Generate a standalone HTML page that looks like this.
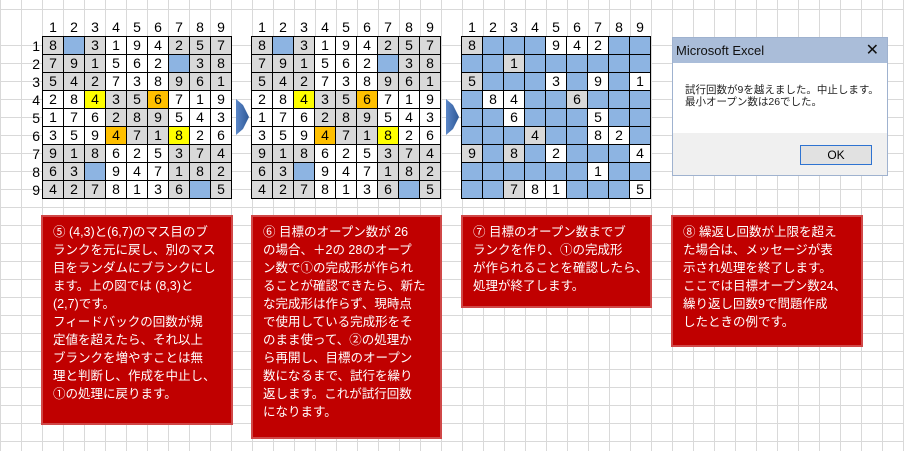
<!DOCTYPE html>
<html><head><meta charset="utf-8"><style>
body{margin:0;width:904px;height:451px;overflow:hidden;position:relative;background:#fff;
background-image:linear-gradient(to right,#d9d9d9 1px,transparent 1px),linear-gradient(to bottom,#d9d9d9 1px,transparent 1px);
background-size:21px 18px;background-position:0 9px;font-family:"Liberation Sans","Noto Sans CJK JP",sans-serif;}
.hdr{position:absolute;top:0;left:0;width:904px;height:36px;background:#fff;
background-image:linear-gradient(to right,#d9d9d9 1px,transparent 1px),linear-gradient(to bottom,#d9d9d9 1px,transparent 1px);background-size:21px 27px;background-position:0 9px;}
.sg{position:absolute;top:19px;}
.sg table{border-collapse:collapse;font-size:14px;}
.sg td{width:20px;height:17px;padding:0;text-align:center;line-height:17px;}
.sg tr.h td{border:none;height:17px;}
.sg td.b{border:1px solid #000;background:#fff}
.g{background:#d9d9d9!important}.u{background:#8db4e2!important}.y{background:#ffff00!important}.o{background:#ffc000!important}
.rl{position:absolute;font-size:14px;left:28px;}
.box{position:absolute;top:215px;background:#c00000;border:2px solid #d04848;color:#fff;font-size:12.5px;line-height:18px;padding:6px 0 0 10px;box-sizing:border-box;white-space:nowrap;}
.arr{position:absolute;top:95px;}
.dlg{position:absolute;left:672px;top:37px;width:216px;height:139px;background:#fff;border:1px solid #9fb2cf;box-sizing:border-box;}
</style></head><body>
<div class="hdr"></div>
<div class="rl" style="top:37px;line-height:18px;width:12px;text-align:right">1<br>2<br>3<br>4<br>5<br>6<br>7<br>8<br>9</div>

<div class="sg" style="left:42px"><table>
<tr class="h"><td>1</td><td>2</td><td>3</td><td>4</td><td>5</td><td>6</td><td>7</td><td>8</td><td>9</td></tr>
<tr><td class="b g">8</td><td class="b u"></td><td class="b g">3</td><td class="b">1</td><td class="b">9</td><td class="b">4</td><td class="b g">2</td><td class="b g">5</td><td class="b g">7</td></tr>
<tr><td class="b g">7</td><td class="b g">9</td><td class="b g">1</td><td class="b">5</td><td class="b">6</td><td class="b">2</td><td class="b u"></td><td class="b g">3</td><td class="b g">8</td></tr>
<tr><td class="b g">5</td><td class="b g">4</td><td class="b g">2</td><td class="b">7</td><td class="b">3</td><td class="b">8</td><td class="b g">9</td><td class="b g">6</td><td class="b g">1</td></tr>
<tr><td class="b">2</td><td class="b">8</td><td class="b y">4</td><td class="b g">3</td><td class="b g">5</td><td class="b o">6</td><td class="b">7</td><td class="b">1</td><td class="b">9</td></tr>
<tr><td class="b">1</td><td class="b">7</td><td class="b">6</td><td class="b g">2</td><td class="b g">8</td><td class="b g">9</td><td class="b">5</td><td class="b">4</td><td class="b">3</td></tr>
<tr><td class="b">3</td><td class="b">5</td><td class="b">9</td><td class="b o">4</td><td class="b g">7</td><td class="b g">1</td><td class="b y">8</td><td class="b">2</td><td class="b">6</td></tr>
<tr><td class="b g">9</td><td class="b g">1</td><td class="b g">8</td><td class="b">6</td><td class="b">2</td><td class="b">5</td><td class="b g">3</td><td class="b g">7</td><td class="b g">4</td></tr>
<tr><td class="b g">6</td><td class="b g">3</td><td class="b u"></td><td class="b">9</td><td class="b">4</td><td class="b">7</td><td class="b g">1</td><td class="b g">8</td><td class="b g">2</td></tr>
<tr><td class="b g">4</td><td class="b g">2</td><td class="b g">7</td><td class="b">8</td><td class="b">1</td><td class="b">3</td><td class="b g">6</td><td class="b u"></td><td class="b g">5</td></tr>
</table></div>

<div class="sg" style="left:251px"><table>
<tr class="h"><td>1</td><td>2</td><td>3</td><td>4</td><td>5</td><td>6</td><td>7</td><td>8</td><td>9</td></tr>
<tr><td class="b g">8</td><td class="b u"></td><td class="b g">3</td><td class="b">1</td><td class="b">9</td><td class="b">4</td><td class="b g">2</td><td class="b g">5</td><td class="b g">7</td></tr>
<tr><td class="b g">7</td><td class="b g">9</td><td class="b g">1</td><td class="b">5</td><td class="b">6</td><td class="b">2</td><td class="b u"></td><td class="b g">3</td><td class="b g">8</td></tr>
<tr><td class="b g">5</td><td class="b g">4</td><td class="b g">2</td><td class="b">7</td><td class="b">3</td><td class="b">8</td><td class="b g">9</td><td class="b g">6</td><td class="b g">1</td></tr>
<tr><td class="b">2</td><td class="b">8</td><td class="b y">4</td><td class="b g">3</td><td class="b g">5</td><td class="b o">6</td><td class="b">7</td><td class="b">1</td><td class="b">9</td></tr>
<tr><td class="b">1</td><td class="b">7</td><td class="b">6</td><td class="b g">2</td><td class="b g">8</td><td class="b g">9</td><td class="b">5</td><td class="b">4</td><td class="b">3</td></tr>
<tr><td class="b">3</td><td class="b">5</td><td class="b">9</td><td class="b o">4</td><td class="b g">7</td><td class="b g">1</td><td class="b y">8</td><td class="b">2</td><td class="b">6</td></tr>
<tr><td class="b g">9</td><td class="b g">1</td><td class="b g">8</td><td class="b">6</td><td class="b">2</td><td class="b">5</td><td class="b g">3</td><td class="b g">7</td><td class="b g">4</td></tr>
<tr><td class="b g">6</td><td class="b g">3</td><td class="b u"></td><td class="b">9</td><td class="b">4</td><td class="b">7</td><td class="b g">1</td><td class="b g">8</td><td class="b g">2</td></tr>
<tr><td class="b g">4</td><td class="b g">2</td><td class="b g">7</td><td class="b">8</td><td class="b">1</td><td class="b">3</td><td class="b g">6</td><td class="b u"></td><td class="b g">5</td></tr>
</table></div>

<div class="sg" style="left:461px"><table>
<tr class="h"><td>1</td><td>2</td><td>3</td><td>4</td><td>5</td><td>6</td><td>7</td><td>8</td><td>9</td></tr>
<tr><td class="b g">8</td><td class="b u"></td><td class="b u"></td><td class="b u"></td><td class="b">9</td><td class="b">4</td><td class="b">2</td><td class="b u"></td><td class="b u"></td></tr>
<tr><td class="b u"></td><td class="b u"></td><td class="b g">1</td><td class="b u"></td><td class="b u"></td><td class="b u"></td><td class="b u"></td><td class="b u"></td><td class="b u"></td></tr>
<tr><td class="b g">5</td><td class="b u"></td><td class="b u"></td><td class="b u"></td><td class="b">3</td><td class="b u"></td><td class="b">9</td><td class="b u"></td><td class="b">1</td></tr>
<tr><td class="b u"></td><td class="b">8</td><td class="b">4</td><td class="b u"></td><td class="b u"></td><td class="b g">6</td><td class="b u"></td><td class="b u"></td><td class="b u"></td></tr>
<tr><td class="b u"></td><td class="b u"></td><td class="b">6</td><td class="b u"></td><td class="b u"></td><td class="b u"></td><td class="b">5</td><td class="b u"></td><td class="b u"></td></tr>
<tr><td class="b u"></td><td class="b u"></td><td class="b u"></td><td class="b g">4</td><td class="b u"></td><td class="b u"></td><td class="b">8</td><td class="b">2</td><td class="b u"></td></tr>
<tr><td class="b g">9</td><td class="b u"></td><td class="b g">8</td><td class="b u"></td><td class="b">2</td><td class="b u"></td><td class="b u"></td><td class="b u"></td><td class="b">4</td></tr>
<tr><td class="b u"></td><td class="b u"></td><td class="b u"></td><td class="b u"></td><td class="b u"></td><td class="b u"></td><td class="b">1</td><td class="b u"></td><td class="b u"></td></tr>
<tr><td class="b u"></td><td class="b u"></td><td class="b g">7</td><td class="b">8</td><td class="b">1</td><td class="b u"></td><td class="b u"></td><td class="b u"></td><td class="b">5</td></tr>
</table></div>

<svg class="arr" style="left:235px" width="16" height="44"><defs><linearGradient id="a" x1="0" x2="1"><stop offset="0" stop-color="#5a86c8"/><stop offset="1" stop-color="#2f5a98"/></linearGradient></defs><polygon points="1,4 8,10 14,22 8,34 1,40" fill="url(#a)"/></svg>
<svg class="arr" style="left:445px" width="16" height="44"><polygon points="1,4 8,10 14,22 8,34 1,40" fill="url(#a)"/></svg>

<div class="dlg">
<div style="height:25px;background:#aabdd9;font-size:13px;line-height:25px;padding-left:3px;color:#111">Microsoft Excel<span style="position:absolute;right:8px;top:0;font-size:16px">✕</span></div>
<div style="padding:21px 0 0 12px;font-size:10.5px;line-height:12px;color:#222">試行回数が9を越えました。中止します。<br>最小オープン数は26でした。</div>
<div style="position:absolute;left:0;right:0;bottom:0;height:42px;background:#f0f0f0"></div>
<div style="position:absolute;left:127px;top:107px;width:70px;height:18px;border:1px solid #2e73d1;background:#e1e1e1;font-size:12px;text-align:center;line-height:18px">OK</div>
</div>

<div class="box" style="left:41px;width:192px;height:210px">⑤ (4,3)と(6,7)のマス目のブ<br>ランクを元に戻し、別のマス<br>目をランダムにブランクにし<br>ます。上の図では (8,3)と<br>(2,7)です。<br>フィードバックの回数が規<br>定値を超えたら、それ以上<br>ブランクを増やすことは無<br>理と判断し、作成を中止し、<br>①の処理に戻ります。</div>
<div class="box" style="left:251px;width:191px;height:224px">⑥ 目標のオープン数が 26<br>の場合、＋2の 28のオープ<br>ン数で①の完成形が作られ<br>ることが確認できたら、新た<br>な完成形は作らず、現時点<br>で使用している完成形をそ<br>のまま使って、②の処理か<br>ら再開し、目標のオープン<br>数になるまで、試行を繰り<br>返します。これが試行回数<br>になります。</div>
<div class="box" style="left:461px;width:191px;height:93px">⑦ 目標のオープン数までブ<br>ランクを作り、①の完成形<br>が作られることを確認したら、<br>処理が終了します。</div>
<div class="box" style="left:671px;width:192px;height:132px">⑧ 繰返し回数が上限を超え<br>た場合は、メッセージが表<br>示され処理を終了します。<br>ここでは目標オープン数24、<br>繰り返し回数9で問題作成<br>したときの例です。</div>
</body></html>
